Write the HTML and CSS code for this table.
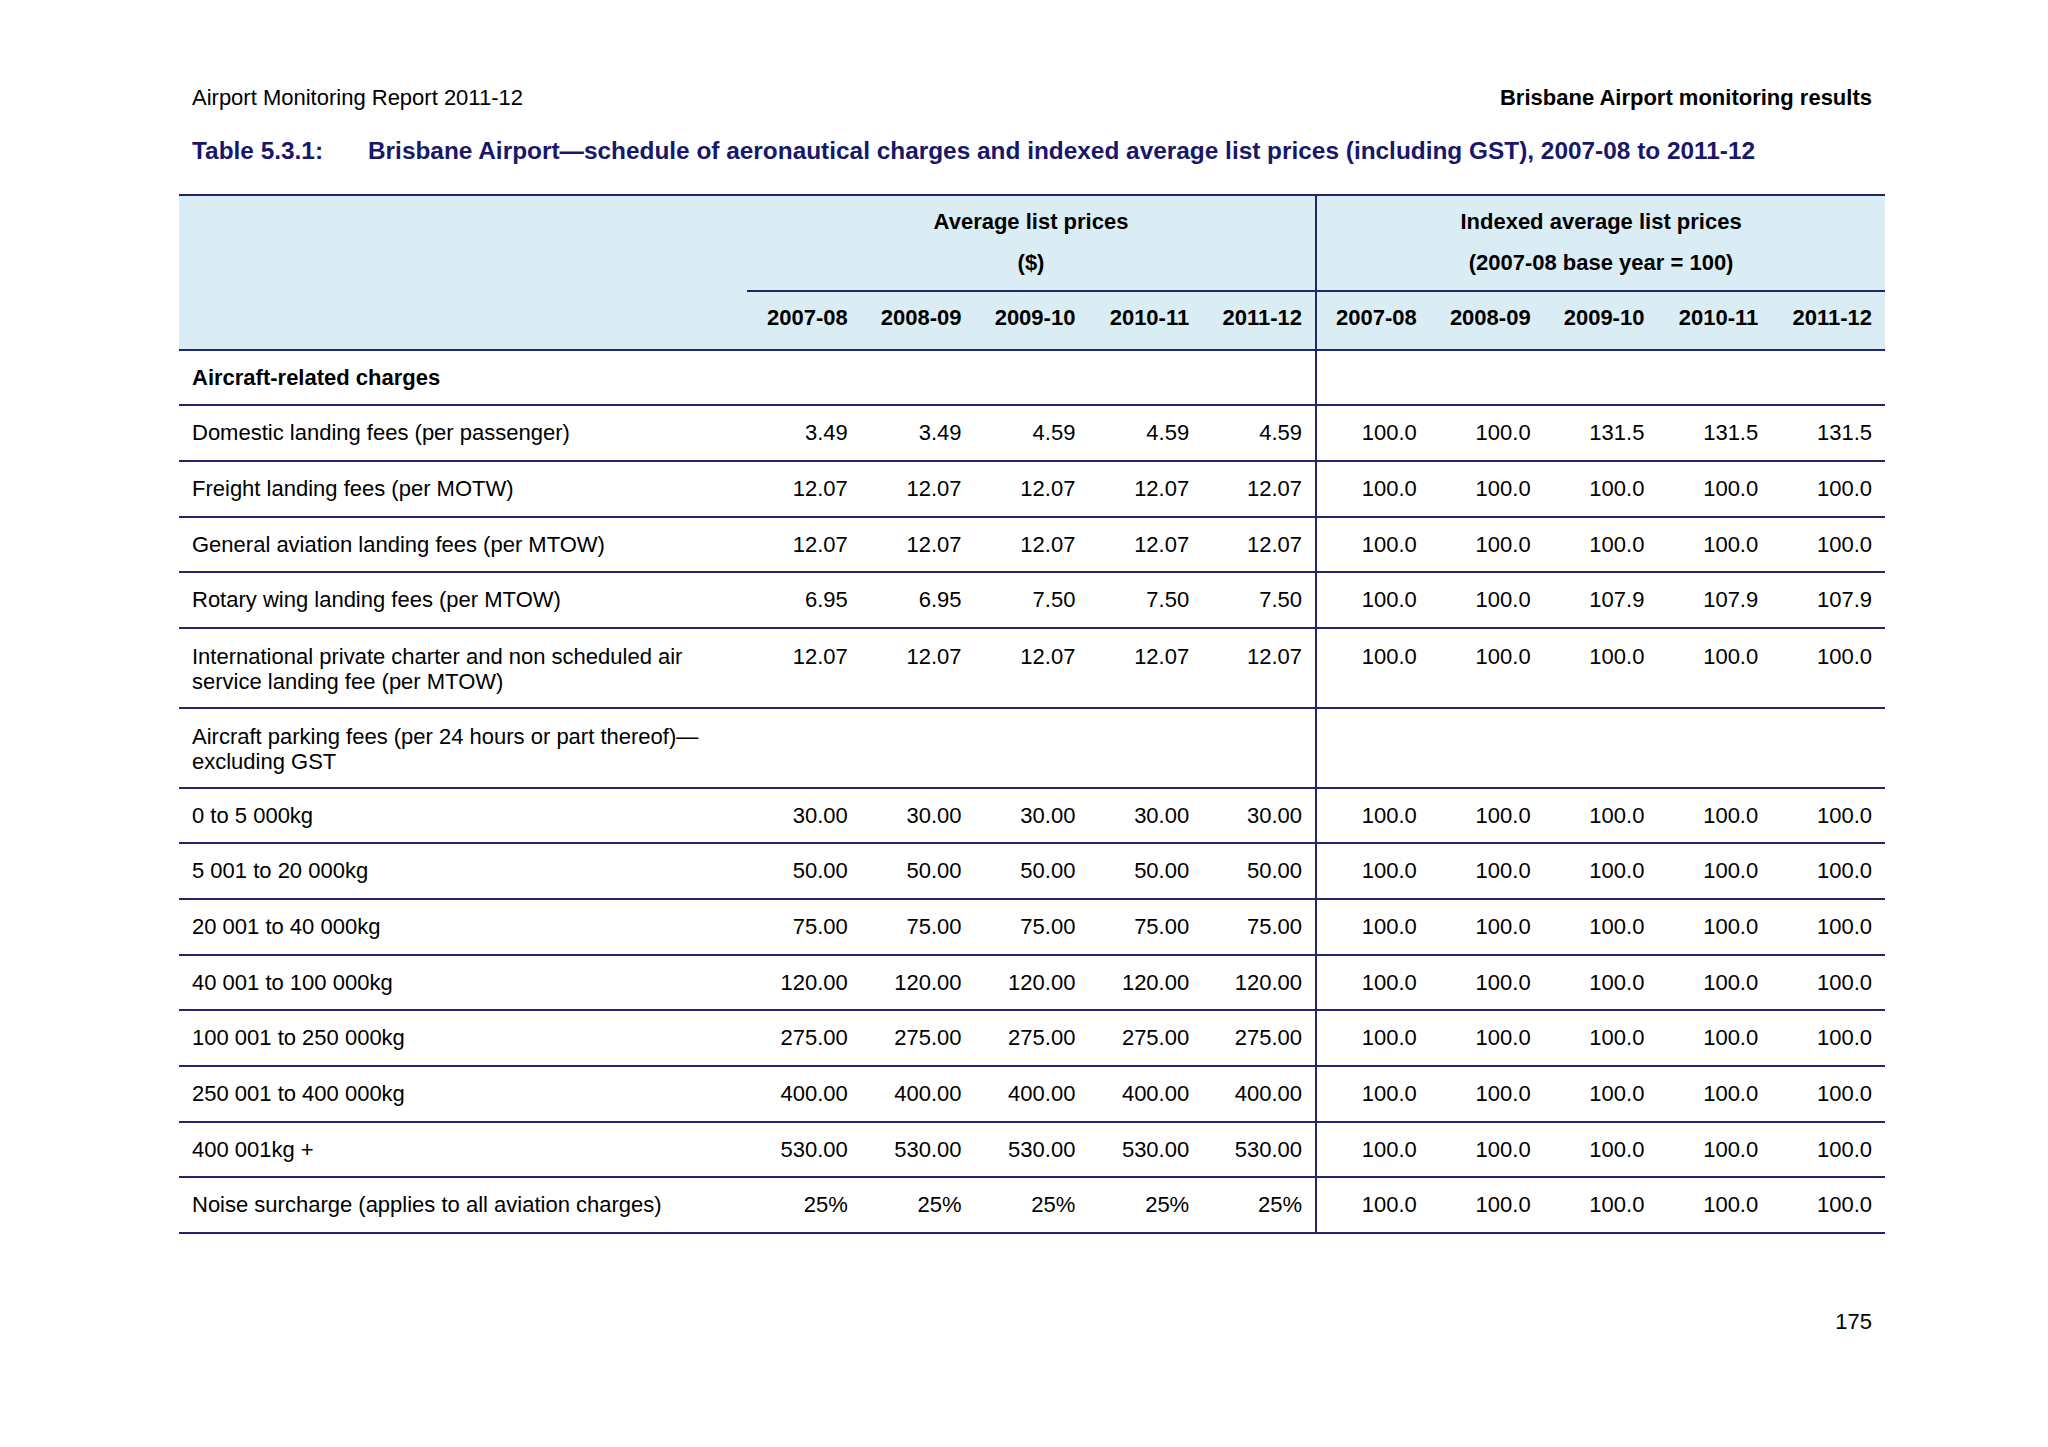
FILE: index.html
```html
<!DOCTYPE html>
<html>
<head>
<meta charset="utf-8">
<link rel="stylesheet" href="styles.css">
</head>
<body>
<div class="page">
  <header class="running">
    <span class="running-left">Airport Monitoring Report 2011-12</span>
    <span class="running-right">Brisbane Airport monitoring results</span>
  </header>
  <h1 class="title"><span class="title-num">Table 5.3.1:</span><span class="title-text">Brisbane Airport—schedule of aeronautical charges and indexed average list prices (including GST), 2007-08 to 2011-12</span></h1>
  <table class="charges">
    <colgroup>
      <col class="c-label">
      <col class="c-num"><col class="c-num"><col class="c-num"><col class="c-num"><col class="c-num">
      <col class="c-num"><col class="c-num"><col class="c-num"><col class="c-num"><col class="c-num">
    </colgroup>
    <thead>
      <tr class="group-row">
        <th class="corner" rowspan="2"></th>
        <th class="group divider" colspan="5"><div>Average list prices</div><div class="sub">($)</div></th>
        <th class="group" colspan="5"><div>Indexed average list prices</div><div class="sub">(2007-08 base year = 100)</div></th>
      </tr>
      <tr class="year-row">
        <th>2007-08</th><th>2008-09</th><th>2009-10</th><th>2010-11</th><th class="divider">2011-12</th>
        <th>2007-08</th><th>2008-09</th><th>2009-10</th><th>2010-11</th><th>2011-12</th>
      </tr>
    </thead>
    <tbody>
      <tr class="section"><td class="label">Aircraft-related charges</td><td></td><td></td><td></td><td></td><td class="divider"></td><td></td><td></td><td></td><td></td><td></td></tr>
      <tr><td class="label">Domestic landing fees (per passenger)</td><td>3.49</td><td>3.49</td><td>4.59</td><td>4.59</td><td class="divider">4.59</td><td>100.0</td><td>100.0</td><td>131.5</td><td>131.5</td><td>131.5</td></tr>
      <tr><td class="label">Freight landing fees (per MOTW)</td><td>12.07</td><td>12.07</td><td>12.07</td><td>12.07</td><td class="divider">12.07</td><td>100.0</td><td>100.0</td><td>100.0</td><td>100.0</td><td>100.0</td></tr>
      <tr><td class="label">General aviation landing fees (per MTOW)</td><td>12.07</td><td>12.07</td><td>12.07</td><td>12.07</td><td class="divider">12.07</td><td>100.0</td><td>100.0</td><td>100.0</td><td>100.0</td><td>100.0</td></tr>
      <tr><td class="label">Rotary wing landing fees (per MTOW)</td><td>6.95</td><td>6.95</td><td>7.50</td><td>7.50</td><td class="divider">7.50</td><td>100.0</td><td>100.0</td><td>107.9</td><td>107.9</td><td>107.9</td></tr>
      <tr class="two-line"><td class="label">International private charter and non scheduled air<br>service landing fee (per MTOW)</td><td>12.07</td><td>12.07</td><td>12.07</td><td>12.07</td><td class="divider">12.07</td><td>100.0</td><td>100.0</td><td>100.0</td><td>100.0</td><td>100.0</td></tr>
      <tr class="two-line"><td class="label">Aircraft parking fees (per 24 hours or part thereof)—<br>excluding GST</td><td></td><td></td><td></td><td></td><td class="divider"></td><td></td><td></td><td></td><td></td><td></td></tr>
      <tr><td class="label">0 to 5 000kg</td><td>30.00</td><td>30.00</td><td>30.00</td><td>30.00</td><td class="divider">30.00</td><td>100.0</td><td>100.0</td><td>100.0</td><td>100.0</td><td>100.0</td></tr>
      <tr><td class="label">5 001 to 20 000kg</td><td>50.00</td><td>50.00</td><td>50.00</td><td>50.00</td><td class="divider">50.00</td><td>100.0</td><td>100.0</td><td>100.0</td><td>100.0</td><td>100.0</td></tr>
      <tr><td class="label">20 001 to 40 000kg</td><td>75.00</td><td>75.00</td><td>75.00</td><td>75.00</td><td class="divider">75.00</td><td>100.0</td><td>100.0</td><td>100.0</td><td>100.0</td><td>100.0</td></tr>
      <tr><td class="label">40 001 to 100 000kg</td><td>120.00</td><td>120.00</td><td>120.00</td><td>120.00</td><td class="divider">120.00</td><td>100.0</td><td>100.0</td><td>100.0</td><td>100.0</td><td>100.0</td></tr>
      <tr><td class="label">100 001 to 250 000kg</td><td>275.00</td><td>275.00</td><td>275.00</td><td>275.00</td><td class="divider">275.00</td><td>100.0</td><td>100.0</td><td>100.0</td><td>100.0</td><td>100.0</td></tr>
      <tr><td class="label">250 001 to 400 000kg</td><td>400.00</td><td>400.00</td><td>400.00</td><td>400.00</td><td class="divider">400.00</td><td>100.0</td><td>100.0</td><td>100.0</td><td>100.0</td><td>100.0</td></tr>
      <tr><td class="label">400 001kg +</td><td>530.00</td><td>530.00</td><td>530.00</td><td>530.00</td><td class="divider">530.00</td><td>100.0</td><td>100.0</td><td>100.0</td><td>100.0</td><td>100.0</td></tr>
      <tr><td class="label">Noise surcharge (applies to all aviation charges)</td><td>25%</td><td>25%</td><td>25%</td><td>25%</td><td class="divider">25%</td><td>100.0</td><td>100.0</td><td>100.0</td><td>100.0</td><td>100.0</td></tr>
    </tbody>
  </table>
  <footer class="pageno">175</footer>
</div>
</body>
</html>
```

FILE: styles.css
```css
html, body {
  margin: 0;
  padding: 0;
  background: #ffffff;
}

.page {
  width: 2048px;
  height: 1447px;
  box-sizing: border-box;
  padding: 85px 163px 0 179px;
  font-family: "Liberation Sans", Arial, sans-serif;
  color: #000000;
  font-size: 22px;
  line-height: 24px;
}

.running {
  display: flex;
  justify-content: space-between;
  padding: 0 13px;
  line-height: 26px;
}

.running-right {
  font-weight: bold;
}

.title {
  margin: 26px 0 0 0;
  padding: 0 13px;
  display: flex;
  font-size: 24.4px;
  line-height: 28px;
  font-weight: bold;
  color: #17176b;
}

.title-num {
  flex: 0 0 176px;
}

.charges {
  margin-top: 29px;
  width: 1706px;
  table-layout: fixed;
  border-collapse: collapse;
  border-top: 2px solid #25256f;
}

.c-label {
  width: 568px;
}

.c-num {
  width: 113.8px;
}

.charges th,
.charges td {
  padding: 0 13px;
  vertical-align: top;
  text-align: right;
}

.charges thead th {
  background: #dbedf4;
  font-weight: bold;
}

.group-row th {
  padding-top: 14px;
  padding-bottom: 15.5px;
  text-align: center;
  border-bottom: 2px solid #25256f;
}

.group-row th.corner {
  border-bottom: 2px solid #25256f;
}

.group .sub {
  margin-top: 16.5px;
}

.year-row th {
  padding-top: 13.5px;
  padding-bottom: 19px;
  border-bottom: 2px solid #25256f;
}

.charges td {
  padding-top: 15px;
  padding-bottom: 14.7px;
  border-bottom: 2px solid #25256f;
}

.two-line td {
  line-height: 25px;
  padding-bottom: 12.8px;
}

.charges td.label {
  text-align: left;
}

.section .label {
  font-weight: bold;
}

.charges .divider {
  border-right: 2px solid #25256f;
}

.pageno {
  margin-top: 75px;
  padding-right: 13px;
  text-align: right;
  line-height: 26px;
}
```
